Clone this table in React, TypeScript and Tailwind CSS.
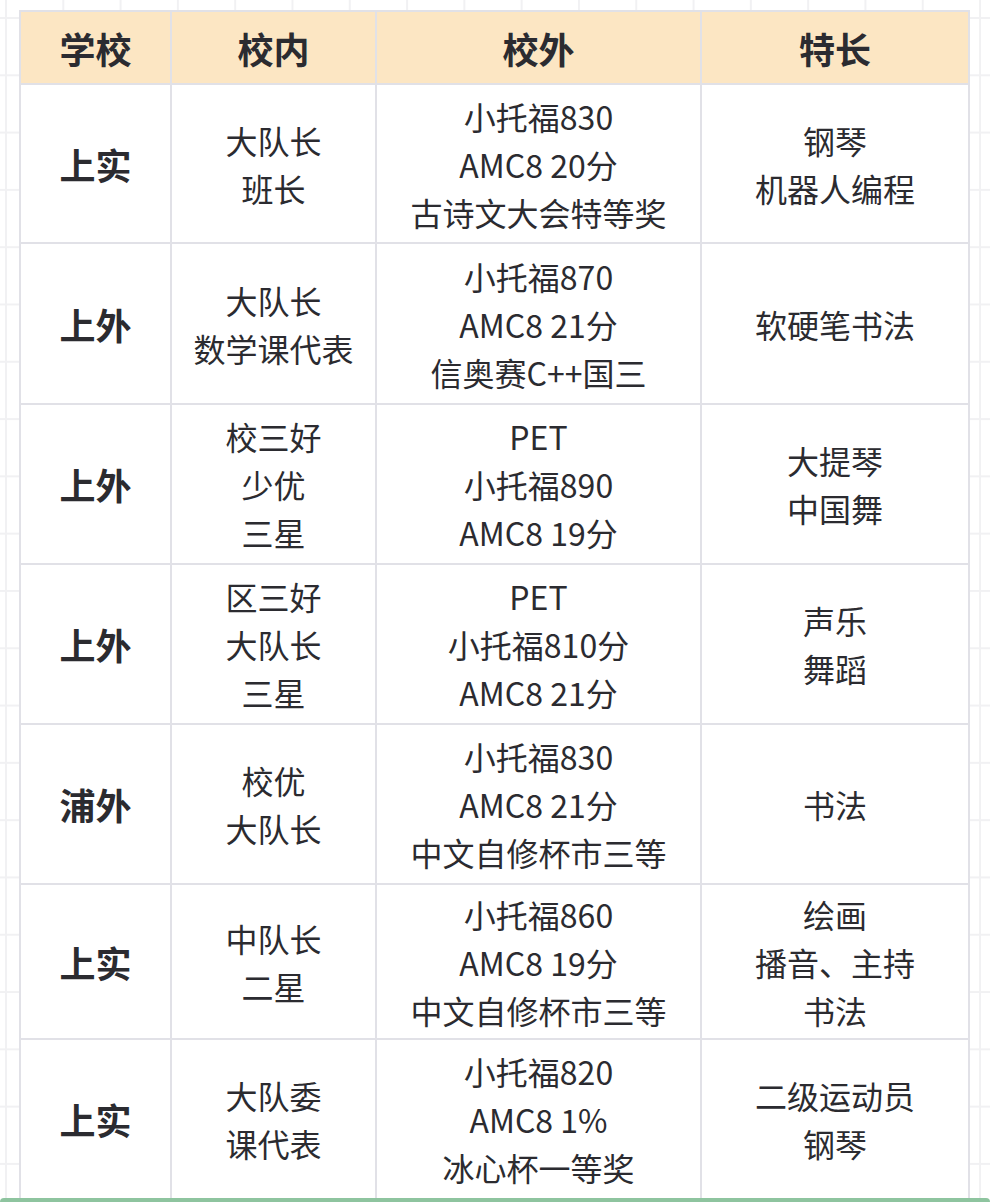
const rows: { school: string; inner: string[]; outer: string[]; skill: string[]; h: string }[] = [
  { school: "上实", inner: ["大队长", "班长"], outer: ["小托福830", "AMC8 20分", "古诗文大会特等奖"], skill: ["钢琴", "机器人编程"], h: "h-[159px]" },
  { school: "上外", inner: ["大队长", "数学课代表"], outer: ["小托福870", "AMC8 21分", "信奥赛C++国三"], skill: ["软硬笔书法"], h: "h-[161px]" },
  { school: "上外", inner: ["校三好", "少优", "三星"], outer: ["PET", "小托福890", "AMC8 19分"], skill: ["大提琴", "中国舞"], h: "h-[160px]" },
  { school: "上外", inner: ["区三好", "大队长", "三星"], outer: ["PET", "小托福810分", "AMC8 21分"], skill: ["声乐", "舞蹈"], h: "h-[160px]" },
  { school: "浦外", inner: ["校优", "大队长"], outer: ["小托福830", "AMC8 21分", "中文自修杯市三等"], skill: ["书法"], h: "h-[160px]" },
  { school: "上实", inner: ["中队长", "二星"], outer: ["小托福860", "AMC8 19分", "中文自修杯市三等"], skill: ["绘画", "播音、主持", "书法"], h: "h-[155px]" },
  { school: "上实", inner: ["大队委", "课代表"], outer: ["小托福820", "AMC8 1%", "冰心杯一等奖"], skill: ["二级运动员", "钢琴"], h: "h-[160px]" },
];

function Lines({ items }: { items: string[] }) {
  return (
    <>
      {items.map((t, i) => (
        <div key={i}>{t}</div>
      ))}
    </>
  );
}

export default function App() {
  const cell = "border-2 border-[#e1e1e7] text-center align-middle";
  return (
    <div
      className="relative w-[990px] h-[1202px] overflow-hidden bg-white bg-[linear-gradient(to_right,#f1f1f3_2px,transparent_2px),linear-gradient(to_bottom,#f1f1f3_2px,transparent_2px)] bg-[length:57.3px_57.3px] bg-[position:5px_17px] pt-[10px] pl-[19px] text-[#2b2b30]"
      style={{ fontFamily: '"Noto Sans CJK SC", "Noto Sans", sans-serif' }}
    >
      <table className="border-collapse bg-white table-fixed w-[949px]">
        <colgroup>
          <col className="w-[151px]" />
          <col className="w-[205px]" />
          <col className="w-[325px]" />
          <col className="w-[268px]" />
        </colgroup>
        <thead>
          <tr className="h-[73px] bg-[#fce6c3] text-[36px] font-bold">
            <th className={cell}>学校</th>
            <th className={cell}>校内</th>
            <th className={cell}>校外</th>
            <th className={cell}>特长</th>
          </tr>
        </thead>
        <tbody className="text-[32px] leading-[48px]">
          {rows.map((r, i) => (
            <tr key={i} className={r.h}>
              <td className={`${cell} text-[36px] font-bold`}>{r.school}</td>
              <td className={cell}>
                <Lines items={r.inner} />
              </td>
              <td className={cell}>
                <Lines items={r.outer} />
              </td>
              <td className={cell}>
                <Lines items={r.skill} />
              </td>
            </tr>
          ))}
        </tbody>
      </table>
      <div className="absolute left-0 right-0 bottom-0 h-[4px] rounded-t-[10px] bg-[#8ec49f]" />
    </div>
  );
}
